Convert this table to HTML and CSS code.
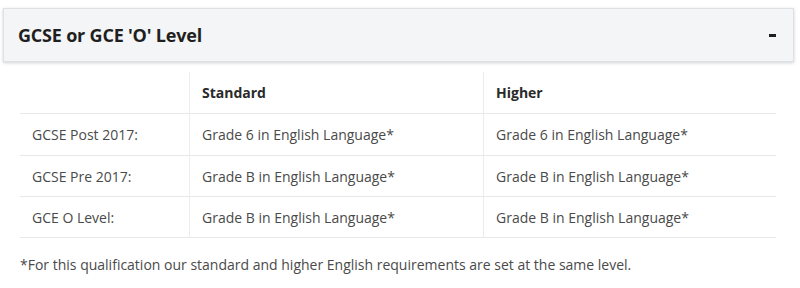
FILE: index.html
```html
<!DOCTYPE html>
<html>
<head>
<meta charset="utf-8">
<link rel="stylesheet" href="styles.css">
</head>
<body>
<div class="page">
  <div class="acc-head">
    <span class="acc-title">GCSE or GCE 'O' Level</span>
    <span class="acc-toggle"></span>
  </div>
  <div class="acc-body">
    <table class="req">
      <thead>
        <tr><th></th><th>Standard</th><th>Higher</th></tr>
      </thead>
      <tbody>
        <tr class="first"><td>GCSE Post 2017:</td><td>Grade 6 in English Language*</td><td>Grade 6 in English Language*</td></tr>
        <tr><td>GCSE Pre 2017:</td><td>Grade B in English Language*</td><td>Grade B in English Language*</td></tr>
        <tr><td>GCE O Level:</td><td>Grade B in English Language*</td><td>Grade B in English Language*</td></tr>
      </tbody>
    </table>
    <p class="note">*For this qualification our standard and higher English requirements are set at the same level.</p>
  </div>
</div>
</body>
</html>
```
FILE: styles.css
```css
html, body { margin: 0; padding: 0; background: #fff; }
body { font-family: "Open Sans", "Noto Sans", sans-serif; color: #4a4a4a; }
.page { padding: 8px 6px 0 3px; }
.acc-head {
  display: flex; align-items: center; justify-content: space-between;
  height: 52px; padding: 0 16px 0 14px;
  background: #f4f5f6; border: 1px solid #dde1e5;
  box-shadow: 0 1px 3px rgba(120,130,140,0.35);
}
.acc-title { font-size: 18px; font-weight: 700; color: #1f1f1f; letter-spacing: -0.2px; }
.acc-toggle { width: 7px; height: 3px; background: #1f1f1f; margin-right: 1px; }
.acc-body { padding: 10px 15px 0 17px; }
.req { width: 756px; border-collapse: collapse; font-size: 14px; }
.req th, .req td { text-align: left; padding: 0 12px; height: 40px; color: #4a4a4a; }
.req th { font-weight: 700; color: #2a2a2a; height: 41px; }
.req tr.first td { height: 41px; }
.req th:first-child, .req td:first-child { width: 145px; }
.req th:nth-child(2), .req td:nth-child(2) { width: 269px; }
.req th + th, .req td + td { border-left: 1px solid #ececec; }
.req tr { border-bottom: 1px solid #e8e8e8; }
.note { margin: 17px 0 0 0; font-size: 14px; color: #4a4a4a; }
```
